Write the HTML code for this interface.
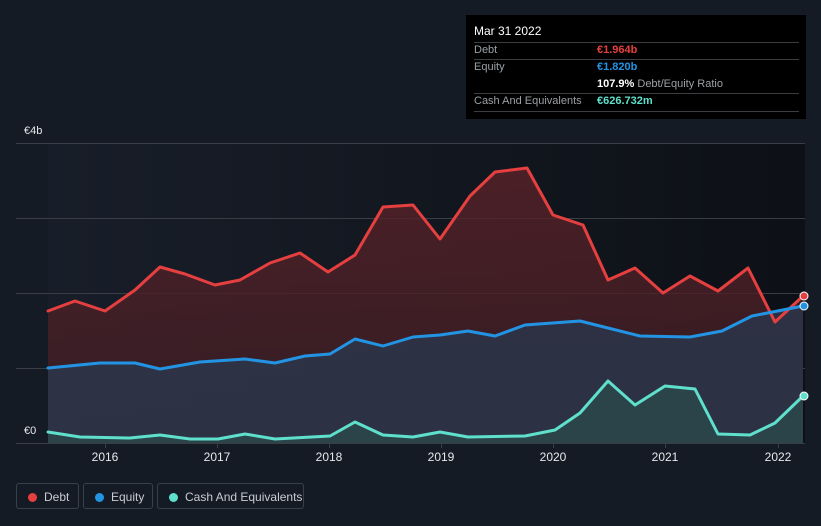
<!DOCTYPE html>
<html><head><meta charset="utf-8"><style>
body{margin:0;width:821px;height:526px;background:#151b25;font-family:"Liberation Sans",sans-serif;overflow:hidden;position:relative}
.tt{position:absolute;left:466px;top:15px;width:340px;height:104px;background:#000;color:#fff;font-size:11px}
.tt .r{position:absolute;left:8px;width:325px;border-top:1px solid #3a3d42}
.lab{position:absolute;left:8px;color:#9aa0a6;font-size:11px}
.val{position:absolute;left:131px;font-size:11px;font-weight:bold}
.leg{position:absolute;top:483px;height:26px;border:1px solid #3a404a;border-radius:3px;color:#c8ccd2;font-size:12px;line-height:26px;box-sizing:border-box}
.leg i{position:absolute;left:11px;top:9px;width:9px;height:9px;border-radius:50%}
.leg span{position:absolute;left:27px}
.yr{position:absolute;top:450px;color:#e6e8eb;font-size:12px;transform:translateX(-50%)}
</style></head><body>
<svg width="821" height="526" style="position:absolute;left:0;top:0">
<defs>
<linearGradient id="bg" x1="0" x2="1"><stop offset="0" stop-color="#181e29"/><stop offset="1" stop-color="#0d1016"/></linearGradient>
<linearGradient id="dg" x1="0" y1="0" x2="0" y2="1"><stop offset="0" stop-color="#5a2228" stop-opacity=".8"/><stop offset="1" stop-color="#3a1d24" stop-opacity=".8"/></linearGradient>
</defs>
<rect x="48" y="143" width="757" height="300" fill="url(#bg)"/>
<g stroke="#3a3e44" stroke-width="1"><line x1="16" y1="143.5" x2="805" y2="143.5"/><line x1="16" y1="218.5" x2="805" y2="218.5"/><line x1="16" y1="293.5" x2="805" y2="293.5"/><line x1="16" y1="368.5" x2="805" y2="368.5"/></g>
<path d="M48,311 L75,301 105,311 135,290 160,267 185,274 215,285 240,280 270,263 300,253 328,272 355,255 383,207 413,205 440,239 470,196 495,172 527,168 553,215 583,225 608,280 635,268 663,293 690,276 718,291 748,268 775,322 803,296 L803,443 48,443Z" fill="url(#dg)"/>
<path d="M48,368 L100,363 135,363 160,369 200,362 245,359 275,363 305,356 330,354 355,339 383,346 413,337 440,335 468,331 495,336 525,325 580,321 608,328 640,336 690,337 722,331 752,316 803,306 L803,443 48,443Z" fill="#2c3448" opacity=".9"/>
<path d="M48,432 L80,437 130,438 160,435 190,439 218,439 245,434 275,439 330,436 355,422 383,435 413,437 440,432 468,437 525,436 555,430 580,413 608,381 635,405 665,386 695,389 718,434 750,435 775,423 803,396 L803,443 48,443Z" fill="#2b4a4c" opacity=".8"/>
<line x1="16" y1="443.5" x2="805" y2="443.5" stroke="#3a3e44"/>
<g fill="none" stroke-width="3" stroke-linejoin="round" stroke-linecap="round">
<polyline stroke="#e5403f" points="48,311 75,301 105,311 135,290 160,267 185,274 215,285 240,280 270,263 300,253 328,272 355,255 383,207 413,205 440,239 470,196 495,172 527,168 553,215 583,225 608,280 635,268 663,293 690,276 718,291 748,268 775,322 803,296"/>
<polyline stroke="#2394e4" points="48,368 100,363 135,363 160,369 200,362 245,359 275,363 305,356 330,354 355,339 383,346 413,337 440,335 468,331 495,336 525,325 580,321 608,328 640,336 690,337 722,331 752,316 803,306"/>
<polyline stroke="#5ee0cc" points="48,432 80,437 130,438 160,435 190,439 218,439 245,434 275,439 330,436 355,422 383,435 413,437 440,432 468,437 525,436 555,430 580,413 608,381 635,405 665,386 695,389 718,434 750,435 775,423 803,396"/>
</g>
<circle cx="804" cy="296" r="4" fill="#e5403f" stroke="#fff"/>
<circle cx="804" cy="306" r="4" fill="#2394e4" stroke="#fff"/>
<circle cx="804" cy="396" r="4" fill="#5ee0cc" stroke="#fff"/>
<g stroke="#3a3e44"><line x1="105.5" y1="443" x2="105.5" y2="448"/><line x1="217.5" y1="443" x2="217.5" y2="448"/><line x1="329.5" y1="443" x2="329.5" y2="448"/><line x1="441.5" y1="443" x2="441.5" y2="448"/><line x1="553.5" y1="443" x2="553.5" y2="448"/><line x1="665.5" y1="443" x2="665.5" y2="448"/><line x1="778.5" y1="443" x2="778.5" y2="448"/></g>
</svg>
<div style="position:absolute;left:24px;top:125px;color:#e6e8eb;font-size:11px">€4b</div>
<div style="position:absolute;left:24px;top:425px;color:#e6e8eb;font-size:11px">€0</div>
<div class="yr" style="left:105px">2016</div><div class="yr" style="left:217px">2017</div><div class="yr" style="left:329px">2018</div><div class="yr" style="left:441px">2019</div><div class="yr" style="left:553px">2020</div><div class="yr" style="left:665px">2021</div><div class="yr" style="left:778px">2022</div>
<div class="tt">
<div style="position:absolute;left:8px;top:9px;font-size:12px">Mar 31 2022</div>
<div class="r" style="top:27px"></div>
<div class="lab" style="top:29px">Debt</div><div class="val" style="top:29px;color:#e5403f">€1.964b</div>
<div class="r" style="top:44px"></div>
<div class="lab" style="top:46px">Equity</div><div class="val" style="top:46px;color:#2394e4">€1.820b</div>
<div class="val" style="top:63px;color:#fff">107.9% <span style="color:#9aa0a6;font-weight:normal">Debt/Equity Ratio</span></div>
<div class="r" style="top:78px"></div>
<div class="lab" style="top:80px">Cash And Equivalents</div><div class="val" style="top:80px;color:#5ee0cc">€626.732m</div>
<div class="r" style="top:96px"></div>
</div>
<div class="leg" style="left:16px;width:63px"><i style="background:#e5403f"></i><span>Debt</span></div>
<div class="leg" style="left:83px;width:70px"><i style="background:#2394e4"></i><span>Equity</span></div>
<div class="leg" style="left:157px;width:147px"><i style="background:#5ee0cc"></i><span>Cash And Equivalents</span></div>
</body></html>
